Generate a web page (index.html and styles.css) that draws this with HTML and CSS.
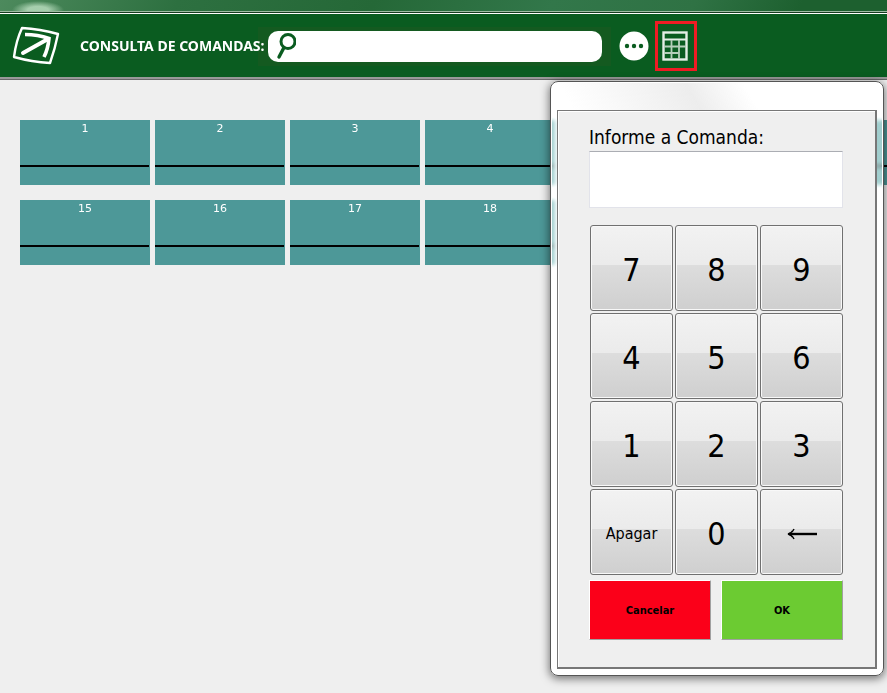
FILE: index.html
```
<!DOCTYPE html>
<html lang="pt-BR">
  <head>
    <meta charset="UTF-8" />
    <meta name="viewport" content="width=device-width, initial-scale=1.0" />
    <title>Consulta de Comandas</title>
    <link rel="stylesheet" href="styles.css" />
  </head>
  <body>
    <div class="titlebar"></div>

    <header class="toolbar">
      <svg class="logo" viewBox="0 0 48 40" aria-hidden="true">
        <path d="M10 2 Q28 3 46 8 Q43 23 38 37 Q20 36 2 31 Q4 15 10 2 Z" fill="none" stroke="#fff" stroke-width="2.4" stroke-linejoin="round" />
        <path d="M13 8.500 Q26 8.500 37 12.500 Q36 23 32 31" fill="none" stroke="#fff" stroke-width="3.600" />
        <path d="M36 13 L11 27" fill="none" stroke="#fff" stroke-width="4" stroke-linecap="round" />
      </svg>
      <label class="toolbar-label" for="search">CONSULTA DE COMANDAS:</label>
      <div class="search">
        <svg class="search-icon" viewBox="0 0 22 28" aria-hidden="true">
          <circle cx="14" cy="9.500" r="7" fill="none" stroke="#0a5c20" stroke-width="3" />
          <path d="M10 15.500 L5 25" stroke="#0a5c20" stroke-width="3.400" stroke-linecap="round" />
        </svg>
        <input type="text" id="search" name="search" />
      </div>
      <button class="more" type="button" aria-label="Mais opções">
        <svg viewBox="0 0 30 30">
          <circle cx="15" cy="15" r="14.500" fill="#fff" />
          <circle cx="8" cy="15" r="2.200" fill="#0a5c20" />
          <circle cx="15" cy="15" r="2.200" fill="#0a5c20" />
          <circle cx="22" cy="15" r="2.200" fill="#0a5c20" />
        </svg>
      </button>
      <button class="calculator" type="button" aria-label="Teclado">
        <svg viewBox="0 0 26 30">
          <rect x="1.500" y="1.500" width="23" height="27" fill="none" stroke="#e4eee6" stroke-width="2.400" />
          <path d="M2 8.500 H24" stroke="#e4eee6" stroke-width="2" />
          <path d="M2 15.500 H24 M2 22 H17 M9.500 9 V28 M17 9 V28" stroke="#b5cfba" stroke-width="1.800" />
        </svg>
      </button>
    </header>

    <main class="comandas">
      <div class="row">
        <a class="tile" href="#">1</a>
        <a class="tile" href="#">2</a>
        <a class="tile" href="#">3</a>
        <a class="tile" href="#">4</a>
        <div class="tile"></div>
        <div class="tile"></div>
        <div class="tile"></div>
      </div>
      <div class="row">
        <a class="tile" href="#">15</a>
        <a class="tile" href="#">16</a>
        <a class="tile" href="#">17</a>
        <a class="tile" href="#">18</a>
      </div>
    </main>

    <div class="dialog" role="dialog" aria-labelledby="comanda-label">
      <form class="dialog-body">
        <label id="comanda-label" for="comanda">Informe a Comanda:</label>
        <input type="text" id="comanda" name="comanda" />
        <div class="keypad">
          <button type="button">7</button>
          <button type="button">8</button>
          <button type="button">9</button>
          <button type="button">4</button>
          <button type="button">5</button>
          <button type="button">6</button>
          <button type="button">1</button>
          <button type="button">2</button>
          <button type="button">3</button>
          <button type="button" class="key-clear">Apagar</button>
          <button type="button">0</button>
          <button type="button" aria-label="Voltar">
            <svg class="arrow" viewBox="0 0 30 12">
              <path d="M2 6 H30" stroke="#000" stroke-width="2.400" />
              <path d="M7 1 Q5 5 1 6 Q5 7 7 11" fill="none" stroke="#000" stroke-width="1.500" />
            </svg>
          </button>
        </div>
        <div class="actions">
          <button type="button" class="cancel">Cancelar</button>
          <button type="button" class="ok">OK</button>
        </div>
      </form>
    </div>
  </body>
</html>
```
FILE: styles.css
```
* {
  box-sizing: border-box;
}

body {
  margin: 0;
  min-height: 100vh;
  background-color: #efefef;
  font-family: "DejaVu Sans Condensed", Tahoma, sans-serif;
  position: relative;
}

button {
  padding: 0;
  font-family: inherit;
  color: #000;
  cursor: pointer;
}

.titlebar {
  height: 14px;
  background:
    radial-gradient(ellipse 26px 9px at 38px 10px, rgba(190, 225, 195, 0.8) 40%, transparent),
    linear-gradient(115deg, #4d8a5d 0%, #2d7040 20%, #256837 42%, #32774a 62%, #2f7244 78%, #1d602f 90%);
  border-bottom: 1px solid #fff;
  box-shadow: inset 0 -1px #173d20, inset 0 -2px #9dbda3;
}

.toolbar {
  display: flex;
  align-items: center;
  height: 66px;
  padding: 0 0 1px 12px;
  background-color: #0a5c20;
  border-bottom: 1px solid #686868;
  box-shadow: inset 0 -2px #999;
}

.logo {
  width: 48px;
  height: 40px;
  margin-right: 20px;
}

.toolbar-label {
  width: 178px;
  padding-bottom: 2px;
  font-family: "Noto Sans", sans-serif;
  font-size: 14px;
  font-weight: bold;
  color: #fff;
  white-space: nowrap;
  z-index: 1;
}

.search {
  display: flex;
  align-items: center;
  width: 353px;
  padding: 4px 9px 4px 10px;
  background-color: #145a20;
}

.search-icon {
  width: 22px;
  height: 28px;
  margin-left: 6px;
  margin-right: -28px;
  z-index: 1;
}

.search input {
  flex: 1;
  min-width: 0;
  height: 31px;
  padding: 0 12px 0 36px;
  border: none;
  border-radius: 10px;
  background-color: #fff;
  font-size: 16px;
}

.more {
  width: 30px;
  height: 30px;
  margin-left: 8px;
  border: none;
  background: none;
}

.more svg,
.calculator svg {
  display: block;
}

.calculator {
  width: 42px;
  height: 50px;
  margin-left: 6px;
  padding-left: 4px;
  border: 3px solid #ee1c24;
  background: none;
}

.calculator svg {
  width: 26px;
  height: 30px;
}

.comandas {
  padding: 40px 0 0 20px;
  overflow: hidden;
}

.row {
  display: flex;
  gap: 5px;
  margin-bottom: 15px;
}

.tile {
  flex: none;
  width: 130px;
  height: 65px;
  padding-top: 2px;
  background: linear-gradient(#000, #000) 0 45px / 129px 2px no-repeat #4d9898;
  color: #fff;
  font-family: "DejaVu Sans", Verdana, sans-serif;
  font-size: 11px;
  line-height: 14px;
  text-align: center;
  text-decoration: none;
}

/* floating window over the list */
.dialog {
  position: absolute;
  top: 81px;
  right: 3px;
  width: 334px;
  padding: 28px 6px 6px;
  border: 1px solid #555;
  border-radius: 8px;
  background:
    linear-gradient(60deg, transparent 20px, rgba(225, 225, 225, 0.6) 130px, transparent 180px) 0 0 / 100% 28px no-repeat,
    rgba(255, 255, 255, 0.45);
  backdrop-filter: blur(2px) brightness(1.1);
  box-shadow: inset 0 0 0 1px #fff, 0 2px 8px 1px rgba(0, 0, 0, 0.5);
}

.dialog-body {
  padding: 14px 32px 27px 31px;
  border: 1px solid #777;
  border-right-width: 2px;
  border-bottom-width: 2px;
  background-color: #efefef;
  box-shadow: inset 1px 1px #fff;
}

.dialog-body label {
  display: block;
  padding-bottom: 2px;
  font-size: 19px;
  line-height: 24px;
}

.dialog-body input {
  display: block;
  width: 100%;
  height: 57px;
  padding: 0 8px;
  border: 1px solid #e2e3ea;
  border-top-color: #abadb3;
  background-color: #fff;
  font-size: 30px;
}

.keypad {
  display: grid;
  grid-template-columns: repeat(3, 1fr);
  gap: 2px;
  padding: 17px 0 5px 1px;
}

.keypad button {
  height: 86px;
  padding-top: 3px;
  border: 1px solid #707070;
  border-radius: 3px;
  background: linear-gradient(#f2f2f2, #ebebeb 46%, #dddddd 46%, #cfcfcf);
  box-shadow: inset 0 0 0 1px #f8f8f8;
  font-size: 32px;
}

.keypad .key-clear {
  font-size: 16px;
}

.arrow {
  display: block;
  width: 30px;
  height: 12px;
  margin: 0 auto;
}

.actions {
  display: grid;
  grid-template-columns: 1fr 1fr;
  gap: 10px;
}

.actions button {
  height: 60px;
  border: 1px solid #a0a0a0;
  border-top-color: #fff;
  border-left-color: #fff;
  font-size: 11px;
  font-weight: bold;
}

.actions .cancel {
  background-color: #fb0019;
}

.actions .ok {
  background-color: #6ccb32;
}
```
